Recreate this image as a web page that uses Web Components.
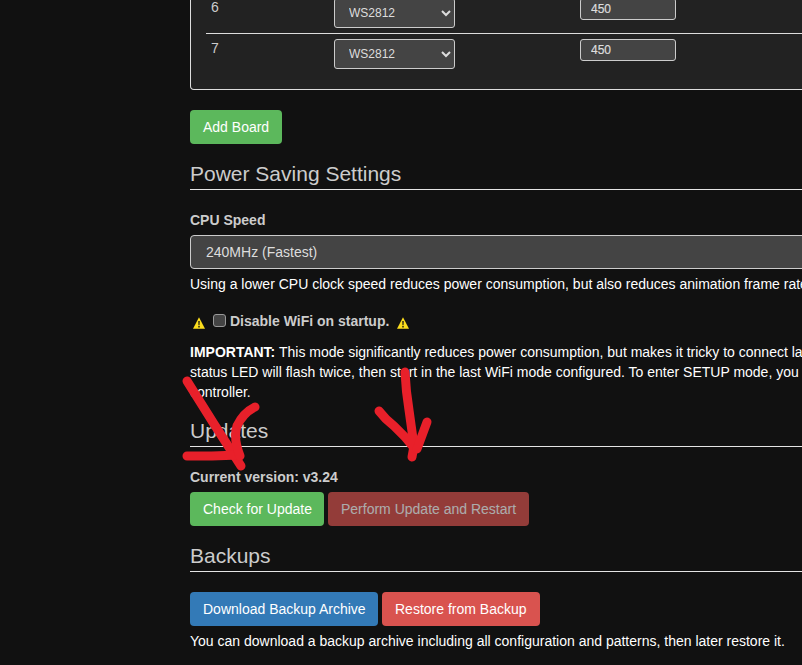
<!DOCTYPE html>
<html>
<head>
<meta charset="utf-8">
<title>Settings</title>
<style>
    html, body {
        margin: 0;
        height: 665px;
        overflow: hidden;
        background: #111;
        color: #fff;
        font: 14px/20px "Liberation Sans", Arial, sans-serif;
    }

    p { margin: 0; white-space: nowrap; }
    p.help { margin-top: 5px; }
    /* collapses with the legend's top margin below it */
    p.note { margin-bottom: -1px; }
</style>
</head>
<body>
<settings-page>
    <board-panel>
        <board-row num="6" first></board-row>
        <board-row num="7"></board-row>
    </board-panel>
    <ui-button kind="success" class="add" style="--w: 92px">Add Board</ui-button>

    <section-legend>Power Saving Settings</section-legend>
    <field-label>CPU Speed</field-label>
    <wide-select>240MHz (Fastest)</wide-select>
    <p class="help">Using a lower CPU clock speed reduces power consumption, but also reduces animation frame rate and network performance.</p>
    <wifi-toggle></wifi-toggle>
    <p class="note"><b>IMPORTANT:</b> This mode significantly reduces power consumption, but makes it tricky to connect later.<br>
    status LED will flash twice, then start in the last WiFi mode configured. To enter SETUP mode, you must reset the<br>
    controller.</p>

    <section-legend>Updates</section-legend>
    <field-label>Current version: v3.24</field-label>
    <button-row>
        <ui-button kind="success" style="--w: 134px">Check for Update</ui-button>
        <ui-button kind="danger" disabled style="--w: 201px">Perform Update and Restart</ui-button>
    </button-row>

    <section-legend>Backups</section-legend>
    <button-row>
        <ui-button kind="primary" style="--w: 188px">Download Backup Archive</ui-button>
        <ui-button kind="danger" style="--w: 158px">Restore from Backup</ui-button>
    </button-row>
    <p class="help">You can download a backup archive including all configuration and patterns, then later restore it.</p>
</settings-page>

<script>
// Settings page components

class SettingsPage extends HTMLElement {
    constructor() {
        super();
        this.attachShadow({ mode: 'open' });
    }

    connectedCallback() {
        this.shadowRoot.innerHTML = `
            <style>
                :host {
                    display: block;
                    position: relative;
                    height: 665px;
                    overflow: hidden;
                }

                .content {
                    width: 1000px;
                    margin-left: 190px;
                }

                /* the marker strokes drawn over the screenshot */
                svg {
                    position: absolute;
                    left: 0;
                    top: 0;
                }

                path {
                    fill: none;
                    stroke: #e8202a;
                    stroke-width: 9;
                    stroke-linecap: round;
                    stroke-linejoin: round;
                }
            </style>
            <div class="content"><slot></slot></div>
            <svg width="802" height="665" viewBox="0 0 802 665">
                <path d="M187 381 L214 424 L241 466"/>
                <path d="M187 456 L212 456 L239 455"/>
                <path d="M255 407 Q243 413 237 426 Q233 438 240 456"/>
                <path d="M405 372 Q406 392 409 410 L414 446 L412 457"/>
                <path d="M379 411 Q385 419 394 426 Q406 437 415 449"/>
                <path d="M427 422 L417 449"/>
            </svg>
        `;
    }
}

class BoardPanel extends HTMLElement {
    constructor() {
        super();
        this.attachShadow({ mode: 'open' });
    }

    connectedCallback() {
        this.shadowRoot.innerHTML = `
            <style>
                :host {
                    display: block;
                    margin-top: -2px;
                    padding: 0 15px 15px;
                    background: #222;
                    border: 1px solid #ddd;
                    border-top: 0;
                    border-radius: 0 0 4px 4px;
                }
            </style>
            <slot></slot>
        `;
    }
}

class BoardRow extends HTMLElement {
    constructor() {
        super();
        this.attachShadow({ mode: 'open' });
    }

    connectedCallback() {
        const num = this.getAttribute('num');
        this.shadowRoot.innerHTML = `
            <style>
                :host {
                    display: grid;
                    grid-template-columns: 128px 246px 1fr;
                    align-items: start;
                    padding: 5px 0;
                    color: #ccc;
                    border-top: 1px solid #ddd;
                }

                :host([first]) {
                    border-top: 0;
                    padding-top: 0;
                }

                .num {
                    margin-top: -1px;
                    padding-left: 5px;
                    font-size: 14px;
                }

                select {
                    display: block;
                    width: 121px;
                    height: 30px;
                    padding: 0 8px 0 10px;
                    margin: 0;
                    font: 12px "Liberation Sans", Arial, sans-serif;
                    color: #ddd;
                    background-color: #444;
                    border: 1px solid #ccc;
                    border-radius: 3px;
                    box-sizing: border-box;
                }

                input {
                    display: block;
                    width: 96px;
                    height: 22px;
                    padding: 0 10px;
                    margin: 0;
                    font: 12px "Liberation Sans", Arial, sans-serif;
                    -webkit-text-stroke: 0.2px #ddd;
                    color: #ddd;
                    background: #444;
                    border: 1px solid #ccc;
                    border-radius: 3px;
                    box-sizing: border-box;
                }
            </style>
            <div class="num">${num}</div>
            <div><select><option>WS2812</option></select></div>
            <div><input value="450"></div>
        `;
    }
}

class UiButton extends HTMLElement {
    constructor() {
        super();
        this.attachShadow({ mode: 'open' });
    }

    connectedCallback() {
        this.shadowRoot.innerHTML = `
            <style>
                :host {
                    display: inline-block;
                    vertical-align: top;
                }

                :host(.add) {
                    display: block;
                    width: max-content;
                    margin-top: 20px;
                }

                button {
                    display: block;
                    width: var(--w, auto);
                    height: 34px;
                    padding: 0 0 0 13px;
                    font: 14px/20px "Liberation Sans", Arial, sans-serif;
                    color: #fff;
                    text-align: left;
                    border: 0;
                    border-radius: 4px;
                    white-space: nowrap;
                }

                :host([kind="success"]) button { background: #5cb85c; }
                :host([kind="danger"]) button { background: #d9534f; }
                :host([kind="primary"]) button { background: #337ab7; }
                :host([disabled]) button { opacity: 0.65; }
            </style>
            <button><slot></slot></button>
        `;
    }
}

class ButtonRow extends HTMLElement {
    constructor() {
        super();
        this.attachShadow({ mode: 'open' });
    }

    connectedCallback() {
        this.shadowRoot.innerHTML = `
            <style>
                :host {
                    display: flex;
                    gap: 4px;
                }
            </style>
            <slot></slot>
        `;
    }
}

class SectionLegend extends HTMLElement {
    constructor() {
        super();
        this.attachShadow({ mode: 'open' });
    }

    connectedCallback() {
        this.shadowRoot.innerHTML = `
            <style>
                :host {
                    display: block;
                    margin: 15px 0 20px;
                    font-size: 21px;
                    line-height: 30px;
                    color: #ccc;
                    border-bottom: 1px solid #e5e5e5;
                }
            </style>
            <slot></slot>
        `;
    }
}

class FieldLabel extends HTMLElement {
    constructor() {
        super();
        this.attachShadow({ mode: 'open' });
    }

    connectedCallback() {
        this.shadowRoot.innerHTML = `
            <style>
                :host {
                    display: block;
                    margin-bottom: 5px;
                    font-weight: bold;
                    color: #ccc;
                }
            </style>
            <slot></slot>
        `;
    }
}

class WideSelect extends HTMLElement {
    constructor() {
        super();
        this.attachShadow({ mode: 'open' });
    }

    connectedCallback() {
        this.shadowRoot.innerHTML = `
            <style>
                :host {
                    display: block;
                    height: 34px;
                    box-sizing: border-box;
                    padding: 6px 15px;
                    color: #ddd;
                    background: #444;
                    border: 1px solid #ccc;
                    border-radius: 4px;
                }
            </style>
            <slot></slot>
        `;
    }
}

class WifiToggle extends HTMLElement {
    constructor() {
        super();
        this.attachShadow({ mode: 'open' });
    }

    connectedCallback() {
        const warn = `
            <svg width="12" height="12" viewBox="0 0 12 12">
                <path d="M6 0.3 L12 11.7 L0 11.7 Z" fill="#fbdc1d"/>
                <path d="M5.3 4 H6.7 L6.5 8.2 H5.5 Z M5.3 9 H6.7 V10.4 H5.3 Z" fill="#111"/>
            </svg>`;
        this.shadowRoot.innerHTML = `
            <style>
                :host {
                    display: flex;
                    align-items: center;
                    height: 20px;
                    margin: 17px 0 11px;
                    padding-left: 3px;
                    font-weight: bold;
                    color: #ccc;
                }

                svg {
                    flex: none;
                    margin-top: 3px;
                }

                input {
                    appearance: none;
                    width: 13px;
                    height: 13px;
                    margin: 0 4px 2px 8px;
                    background: #444;
                    border: 1px solid #999;
                    border-radius: 3px;
                    box-sizing: border-box;
                }

                span {
                    margin-right: 8px;
                }
            </style>
            ${warn}
            <input type="checkbox">
            <span>Disable WiFi on startup.</span>
            ${warn}
        `;
    }
}

customElements.define('settings-page', SettingsPage);
customElements.define('board-panel', BoardPanel);
customElements.define('board-row', BoardRow);
customElements.define('ui-button', UiButton);
customElements.define('button-row', ButtonRow);
customElements.define('section-legend', SectionLegend);
customElements.define('field-label', FieldLabel);
customElements.define('wide-select', WideSelect);
customElements.define('wifi-toggle', WifiToggle);
</script>
</body>
</html>
